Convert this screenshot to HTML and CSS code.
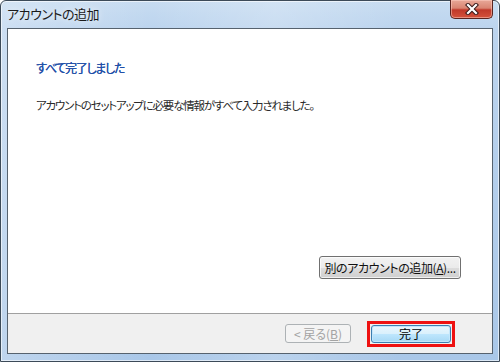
FILE: index.html
```html
<!DOCTYPE html>
<html lang="ja">
<head>
<meta charset="utf-8">
<link rel="stylesheet" href="styles.css">
</head>
<body>
<div class="window">
  <div class="titlebar">
    <div class="title">アカウントの追加</div>
    <div class="close">
      <svg width="16" height="12" viewBox="0 0 16 12">
        <path d="M4 2 L12 10 M12 2 L4 10" stroke="#3a1a1a" stroke-width="4.2" stroke-linecap="square" fill="none"/>
        <path d="M4 2 L12 10 M12 2 L4 10" stroke="#ffffff" stroke-width="2.2" stroke-linecap="square" fill="none"/>
      </svg>
    </div>
  </div>
  <div class="client">
    <div class="main">
      <div class="heading">すべて完了しました</div>
      <div class="message">アカウントのセットアップに必要な情報がすべて入力されました。</div>
      <div class="spacer"></div>
      <div class="row">
        <button class="btn add">別のアカウントの追加(<u>A</u>)...</button>
      </div>
    </div>
    <div class="footer">
      <button class="btn back" disabled>&lt; 戻る(<u>B</u>)</button>
      <div class="highlight">
        <button class="btn finish">完了</button>
      </div>
    </div>
  </div>
</div>
</body>
</html>
```

FILE: styles.css
```css
html, body {
  margin: 0;
  padding: 0;
  background: #ffffff;
}
body {
  font-family: "Noto Sans CJK JP", "Noto Sans", sans-serif;
  font-feature-settings: "palt";
}
.window {
  box-sizing: border-box;
  width: 500px;
  height: 362px;
  border: 1px solid #3c4a58;
  border-radius: 6px 6px 0 0;
  background:
    linear-gradient(to right, rgba(255,255,255,0.25), rgba(255,255,255,0) 30%, rgba(255,255,255,0.2) 55%, rgba(255,255,255,0) 80%),
    linear-gradient(to bottom, #c7dcf1 0px, #bcd4ee 28px, #a9c7e8 100%);
  box-shadow: inset 0 0 0 1px rgba(255,255,255,0.6);
  display: flex;
  flex-direction: column;
}
.titlebar {
  height: 27px;
  display: flex;
  justify-content: space-between;
  align-items: flex-start;
  flex: none;
}
.title {
  font-size: 13px;
  letter-spacing: -0.5px;
  color: #1a1a1a;
  padding: 5px 0 0 6px;
  line-height: 16px;
  text-shadow: 0 0 6px rgba(255,255,255,0.9);
}
.close {
  box-sizing: border-box;
  width: 43px;
  height: 19px;
  margin: -1px 6px 0 0;
  border: 1px solid #5a2420;
  border-top: none;
  border-radius: 0 0 5px 5px;
  background: linear-gradient(to bottom, #e8a898 0%, #d98472 45%, #c0392a 55%, #d4523c 100%);
  box-shadow: inset 0 0 0 1px rgba(255,210,200,0.5);
  display: flex;
  align-items: center;
  justify-content: center;
}
.client {
  flex: 1;
  margin: 0 6px 7px 6px;
  border: 1px solid #56626e;
  background: #ffffff;
  display: flex;
  flex-direction: column;
}
.main {
  flex: 1;
  display: flex;
  flex-direction: column;
  padding: 31px 31px 34px 28px;
}
.heading {
  font-size: 12px;
  letter-spacing: -1.3px;
  line-height: 16px;
  color: #1f4fa8;
  text-shadow: 0.3px 0 0 #1f4fa8;
}
.message {
  margin-top: 21px;
  font-size: 11.5px;
  letter-spacing: -1.2px;
  line-height: 16px;
  color: #2a2a2a;
}
.spacer {
  flex: 1;
}
.row {
  display: flex;
  justify-content: flex-end;
}
.btn {
  box-sizing: border-box;
  font-family: "Noto Sans CJK JP", "Noto Sans", sans-serif;
  font-feature-settings: "palt";
  font-size: 12px;
  line-height: 14px;
  color: #111;
  border: 1px solid #707070;
  border-radius: 3px;
  background: linear-gradient(to bottom, #f2f2f2 0%, #ebebeb 50%, #dddddd 51%, #cfcfcf 100%);
  box-shadow: inset 0 0 0 1px rgba(255,255,255,0.7);
  padding: 0;
}
.add {
  width: 142px;
  height: 23px;
  letter-spacing: -0.4px;
}
.footer {
  height: 39px;
  flex: none;
  border-top: 1px solid #a0a0a0;
  background: #f0f0f0;
  display: flex;
  justify-content: flex-end;
  align-items: center;
  padding-right: 37px;
  gap: 16px;
}
.back {
  width: 66px;
  height: 19px;
  color: #a3a3a3;
  border-color: #adb2b5;
  background: #f4f4f4;
  box-shadow: none;
}
.highlight {
  box-sizing: border-box;
  width: 88px;
  height: 26px;
  border: 3px solid #ee1111;
  padding: 1px;
  display: flex;
}
.finish {
  flex: 1;
  border-color: #3c7fb1;
  background: linear-gradient(to bottom, #eaf6fd 0%, #d9f0fc 50%, #bee6fd 51%, #a7d9f5 100%);
  box-shadow: inset 0 0 0 1px #c3e6fb;
  color: #000;
  font-size: 12px;
}
```
